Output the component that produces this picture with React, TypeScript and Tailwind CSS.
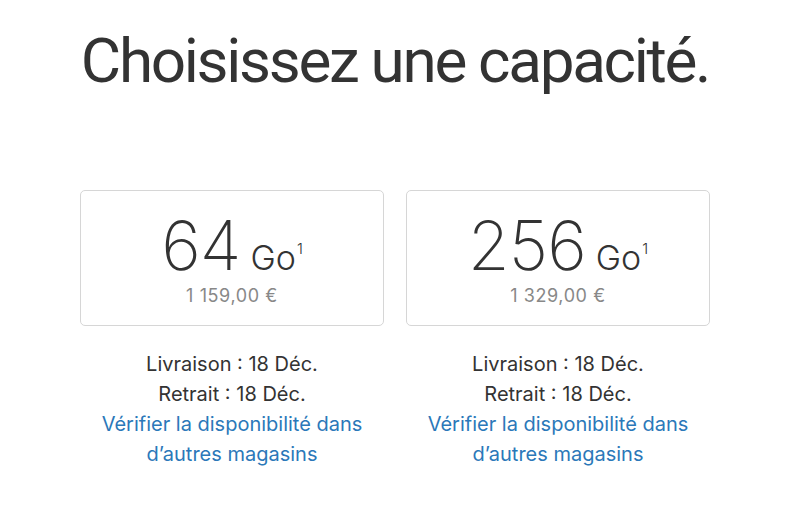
const OPTIONS = [
  { size: '64', price: '1 159,00 €' },
  { size: '256', price: '1 329,00 €' },
];

function CapacityCard({ size, price }: { size: string; price: string }) {
  return (
    <div className="flex flex-col items-center">
      <button className="w-[304px] h-[136px] rounded-[5px] border border-[#d6d6d6] bg-white flex flex-col items-center pt-[26px]">
        <div className="flex items-baseline text-[#333]">
          <span className="text-[68px] leading-[56px] font-extralight tracking-[-1px]">{size}</span>
          <span className="ml-[10px] text-[34px] leading-[28px] font-light">Go</span>
          <sup className="text-[15px] leading-none font-light relative -top-[16px] ml-[1px]">1</sup>
        </div>
        <div className="mt-[14px] text-[18px] leading-[18px] text-[#888] tracking-[0.6px]">{price}</div>
      </button>
      <div className="mt-[23px] flex flex-col items-center text-[20px] leading-[30px] text-[#333]">
        <p>Livraison : 18 Déc.</p>
        <p>Retrait : 18 Déc.</p>
        <a href="#" className="text-[#2b78b9] text-center">
          Vérifier la disponibilité dans
          <br />
          d’autres magasins
        </a>
      </div>
    </div>
  );
}

export default function App() {
  return (
    <div
      className="w-[800px] h-[511px] bg-white overflow-hidden"
      style={{ fontFamily: 'Inter, "Noto Sans", sans-serif' }}
    >
      <div className="ml-[80px] w-[630px] flex flex-col items-center">
        <h1
          className="mt-[30px] text-[62px] leading-none font-normal text-[#333] tracking-[-2.3px] whitespace-nowrap"
          style={{ fontFamily: 'Roboto, "Liberation Sans", sans-serif' }}
        >
          Choisissez une capacité.
        </h1>
        <div className="mt-[98px] flex gap-[22px]">
          {OPTIONS.map((o) => (
            <CapacityCard key={o.size} size={o.size} price={o.price} />
          ))}
        </div>
      </div>
    </div>
  );
}
